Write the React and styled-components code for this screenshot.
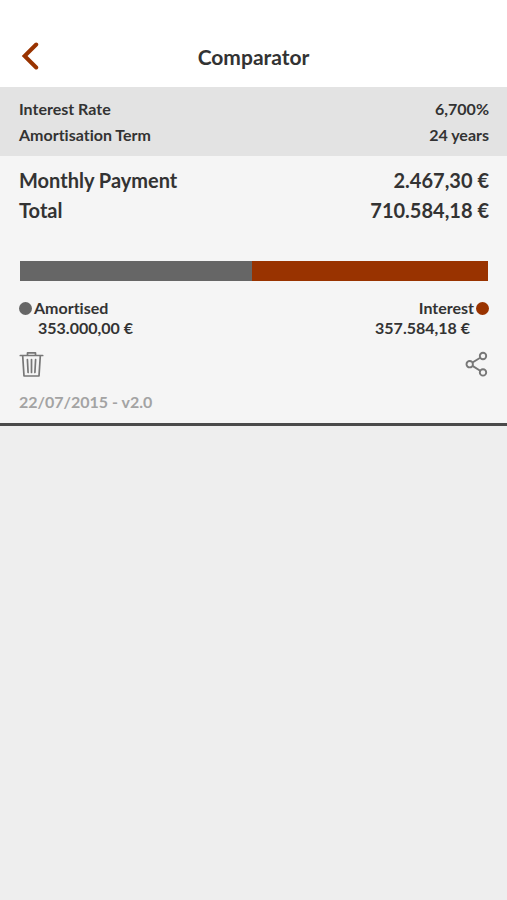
import React from "react";
import styled, { createGlobalStyle } from "styled-components";

// Data
const simulation = {
  terms: [
    { label: "Interest Rate", value: "6,700%" },
    { label: "Amortisation Term", value: "24 years" },
  ],
  totals: [
    { label: "Monthly Payment", value: "2.467,30 €" },
    { label: "Total", value: "710.584,18 €" },
  ],
  amortised: { amount: 353000, text: "353.000,00 €" },
  interest: { amount: 357584.18, text: "357.584,18 €" },
  version: "22/07/2015 - v2.0",
};

// Styles
const GlobalStyle = createGlobalStyle`
  * {
    box-sizing: border-box;
  }

  body {
    margin: 0;
    background: #eeeeee;
    color: #333333;
    font-family: Lato, "Liberation Sans", sans-serif;
    font-weight: 700;
    font-variant-ligatures: none;
  }
`;

const Header = styled.header`
  display: grid;
  grid-template-columns: 40px 1fr 40px;
  align-items: center;
  height: 87px;
  padding: 26px 19px 0;
  background: #ffffff;
`;

const Title = styled.h1`
  margin: 0;
  font-size: 21px;
  line-height: 28px;
  font-weight: 700;
  text-align: center;
`;

const IconButton = styled.button`
  display: flex;
  padding: 0;
  border: 0;
  background: none;
  color: ${({ $color }) => $color || "#777777"};
  cursor: pointer;
`;

const Card = styled.article`
  background: #f5f5f5;
  border-bottom: 3px solid #4a4a4a;
`;

const List = styled.dl`
  margin: 0;
  padding: 9px 18px 8px 19px;
  background: ${({ $shaded }) => ($shaded ? "#e3e3e3" : "none")};
  font-size: ${({ $large }) => ($large ? "20px" : "16px")};
  line-height: ${({ $large }) => ($large ? "30px" : "26px")};
`;

const Row = styled.div`
  display: flex;
  justify-content: space-between;
`;

const Label = styled.dt``;

const Value = styled.dd`
  margin: 0;
`;

const Bar = styled.div`
  display: flex;
  height: 20px;
  margin: 28px 19px 17px 20px;
`;

const BarPart = styled.div`
  background: ${({ $color }) => $color};
`;

const Legend = styled.div`
  display: flex;
  justify-content: space-between;
  padding: 0 18px 0 19px;
  font-size: 16px;
  line-height: 20px;
`;

const LegendItem = styled.div`
  display: flex;
  flex-direction: column;
  align-items: ${({ $end }) => ($end ? "flex-end" : "flex-start")};
`;

const LegendName = styled.div`
  display: flex;
  flex-direction: ${({ $end }) => ($end ? "row-reverse" : "row")};
  align-items: center;
  gap: 2px;
`;

const Dot = styled.span`
  width: 13px;
  height: 13px;
  border-radius: 50%;
  background: ${({ $color }) => $color};
`;

const LegendAmount = styled.div`
  padding: 0 19px;
`;

const Actions = styled.div`
  display: flex;
  justify-content: space-between;
  padding: 13px 18px 12px 19px;
`;

const Version = styled.footer`
  padding: 0 19px 9px;
  color: #a3a3a3;
  font-size: 16px;
  line-height: 24px;
`;

// Icons
const BackIcon = () => (
  <svg width="20" height="30" viewBox="0 0 20 30" fill="none" aria-hidden="true">
    <path
      d="M17.2 2.5 5.6 14 17.2 25.5"
      stroke="currentColor"
      strokeWidth="4"
      strokeLinecap="round"
    />
  </svg>
);

const TrashIcon = () => (
  <svg width="25" height="27" viewBox="0 0 25 27" fill="none" aria-hidden="true">
    <g stroke="currentColor" strokeWidth="1.7" strokeLinejoin="round">
      <path d="M1.3 4.5H23.7" strokeLinecap="round" />
      <path d="M8.5 4V1.9H16.5V4" />
      <path d="M3.7 5 5 25H20L21.3 5" />
      <path
        d="M8.4 8.5 9.1 21.5M12.5 8.5V21.5M16.6 8.5 15.9 21.5"
        strokeLinecap="round"
      />
    </g>
  </svg>
);

const ShareIcon = () => (
  <svg width="25" height="27" viewBox="0 0 25 27" fill="none" aria-hidden="true">
    <g stroke="currentColor" strokeWidth="1.9">
      <circle cx="5.7" cy="13.2" r="3.2" />
      <circle cx="19" cy="5" r="3.2" />
      <circle cx="19" cy="21.4" r="3.2" />
      <path d="M8.5 11.5 16.2 6.7M8.5 14.9 16.2 19.7" />
    </g>
  </svg>
);

// Components
const ValueList = ({ items, ...props }) => (
  <List {...props}>
    {items.map(({ label, value }) => (
      <Row key={label}>
        <Label>{label}</Label>
        <Value>{value}</Value>
      </Row>
    ))}
  </List>
);

const LegendEntry = ({ name, amount, color, end }) => (
  <LegendItem $end={end}>
    <LegendName $end={end}>
      <Dot $color={color} />
      {name}
    </LegendName>
    <LegendAmount>{amount}</LegendAmount>
  </LegendItem>
);

const SimulationCard = ({ terms, totals, amortised, interest, version }) => (
  <Card>
    <ValueList items={terms} $shaded />
    <ValueList items={totals} $large />
    <Bar>
      <BarPart $color="#666666" style={{ flexGrow: amortised.amount }} />
      <BarPart $color="#993300" style={{ flexGrow: interest.amount }} />
    </Bar>
    <Legend>
      <LegendEntry name="Amortised" amount={amortised.text} color="#666666" />
      <LegendEntry name="Interest" amount={interest.text} color="#993300" end />
    </Legend>
    <Actions>
      <IconButton type="button" aria-label="Delete">
        <TrashIcon />
      </IconButton>
      <IconButton type="button" aria-label="Share">
        <ShareIcon />
      </IconButton>
    </Actions>
    <Version>{version}</Version>
  </Card>
);

const App = () => {
  return (
    <>
      <GlobalStyle />
      <Header>
        <IconButton type="button" aria-label="Back" $color="#993300">
          <BackIcon />
        </IconButton>
        <Title>Comparator</Title>
      </Header>
      <main>
        <SimulationCard {...simulation} />
      </main>
    </>
  );
};

export default App;
